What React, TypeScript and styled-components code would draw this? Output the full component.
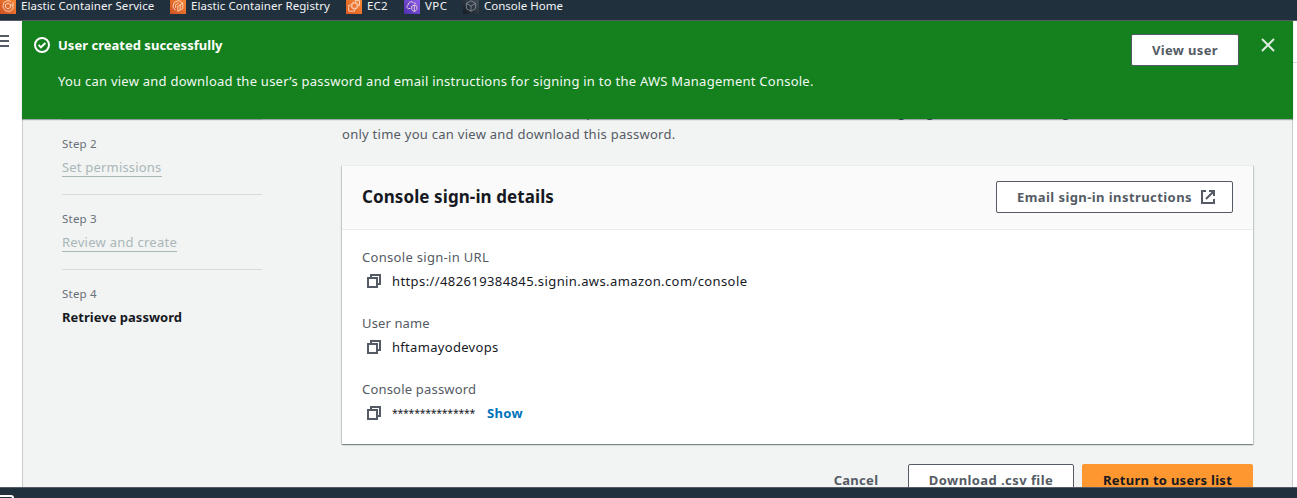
import React from "react";
import styled, { createGlobalStyle, css } from "styled-components";

const Global = createGlobalStyle`
  * { box-sizing: border-box; }
  body { margin: 0; background: #fff; font-family: "Noto Sans", "Open Sans", sans-serif; font-size: 13px; color: #16191f; }
`;

const Page = styled.div`
  display: flex;
  flex-direction: column;
  width: 1297px;
  height: 498px;
  overflow: hidden;
`;

const TopBar = styled.nav`
  display: flex;
  flex: none;
  height: 21px;
  background: #21303d;
  border-bottom: 1px solid #545b64;
  padding-bottom: 6px;
  align-items: flex-end;
`;

const Favorite = styled.a<{ $width: number; $track: number }>`
  display: flex;
  align-items: center;
  gap: 5px;
  height: 16px;
  width: ${(p) => p.$width}px;
  color: #f3f4f5;
  font-size: 11.5px;
  line-height: 12px;
  letter-spacing: ${(p) => p.$track}px;
  white-space: nowrap;
  svg { flex: none; display: block; }
`;

const Body = styled.div`
  display: flex;
  flex: 1;
  min-height: 0;
`;

const LeftRail = styled.aside`
  width: 22px;
  padding-top: 14px;
  background: #fff;
  svg { display: block; }
`;

const RightRail = styled.aside`
  width: 4px;
  background: #fff;
  &::before { content: ""; display: block; height: 41px; border-bottom: 1px solid #d5dbdb; }
`;

const Content = styled.main`
  width: 1271px;
  background: #f2f3f3;
  border-left: 1px solid #c8cccd;
  border-right: 1px solid #c8cccd;
`;

const Banner = styled.section`
  position: relative;
  z-index: 1;
  display: flex;
  align-items: flex-start;
  height: 98px;
  margin: 0 -1px;
  padding: 13px 17px 0 12px;
  background: #14811e;
  color: #f2f8f3;
  box-shadow: 0 1px 1px 0 rgba(0, 28, 36, 0.35);
`;

const BannerText = styled.div`
  flex: 1;
  padding-left: 8px;
  line-height: 22px;
`;

const BannerTitle = styled.div`
  font-weight: 700;
  color: #fff;
  letter-spacing: 0.02px;
`;

const BannerMessage = styled.div`
  margin-top: 14px;
  letter-spacing: 0.247px;
`;

const Columns = styled.div`
  display: flex;
  padding-left: 39px;
`;

const Steps = styled.ol`
  list-style: none;
  margin: 0;
  padding: 0;
  width: 200px;
`;

const Step = styled.li`
  height: 75px;
  padding-top: 16px;
  border-top: 1px solid #d5dbdb;
`;

const StepLabel = styled.div`
  font-size: 11.5px;
  line-height: 16px;
  letter-spacing: 0.22px;
  color: #687078;
`;

const StepTitle = styled.span<{ $current?: boolean; $track: number }>`
  display: inline-block;
  margin-top: 4px;
  height: 21px;
  line-height: 22px;
  letter-spacing: ${(p) => p.$track}px;
  ${(p) =>
    p.$current
      ? css`font-weight: 700; color: #16191f;`
      : css`color: #aab7b8; border-bottom: 1px solid #aab7b8;`}
`;

const Details = styled.div`
  width: 911px;
  margin-left: 80px;
`;

const Intro = styled.p`
  margin: -18px 0 0;
  line-height: 22px;
  letter-spacing: 0.265px;
  color: #545b64;
`;

const Card = styled.section`
  height: 279px;
  margin-top: 20px;
  background: #fff;
  border-top: 1px solid #eaeded;
  box-shadow: 0 1px 1px 0 rgba(0, 28, 36, 0.3), 1px 1px 1px 0 rgba(0, 28, 36, 0.15), -1px 1px 1px 0 rgba(0, 28, 36, 0.15);
`;

const CardHeader = styled.header`
  display: flex;
  align-items: center;
  justify-content: space-between;
  height: 64px;
  padding: 0 20px 2px;
  background: #fafafa;
  border-bottom: 1px solid #eaeded;
`;

const CardTitle = styled.h2`
  margin: 0;
  font-size: 17px;
  line-height: 22px;
  letter-spacing: 0.09px;
`;

const Button = styled.button<{ $kind?: "primary" | "link"; $width: number; $track: number }>`
  display: flex;
  flex: none;
  align-items: center;
  justify-content: center;
  gap: 8px;
  width: ${(p) => p.$width}px;
  height: 32px;
  padding: 0;
  border: 1px solid #545b64;
  border-radius: 2px;
  background: #fff;
  color: #545b64;
  font: 700 13px/20px "Noto Sans", "Open Sans", sans-serif;
  letter-spacing: ${(p) => p.$track}px;
  white-space: nowrap;
  svg { margin-right: -4px; }
  ${(p) => p.$kind === "primary" && css`background: #ff9730; border-color: #ff9730; color: #16191f;`}
  ${(p) => p.$kind === "link" && css`background: transparent; border-color: transparent;`}
`;

const CloseButton = styled.button`
  display: flex;
  margin: 3px 0 0 21px;
  padding: 0;
  border: 0;
  background: none;
`;

const Fields = styled.dl`
  display: flex;
  flex-direction: column;
  gap: 22px;
  margin: 0;
  padding: 16px 20px;
`;

const FieldLabel = styled.dt<{ $track: number }>`
  line-height: 22px;
  letter-spacing: ${(p) => p.$track}px;
  color: #545b64;
`;

const FieldValue = styled.dd<{ $track: number }>`
  display: flex;
  align-items: center;
  margin: 1px 0 -1px;
  padding: 2px 0 0 4px;
  height: 22px;
  line-height: 22px;
  letter-spacing: ${(p) => p.$track}px;
  svg { margin-right: 10px; }
`;

const Mask = styled.span`
  width: 83px;
  font-size: 10.5px;
  letter-spacing: -0.25px;
`;

const ShowLink = styled.a`
  margin-left: 12px;
  font-weight: 700;
  letter-spacing: 0.35px;
  color: #0073bb;
`;

const Actions = styled.div`
  display: flex;
  justify-content: flex-end;
  gap: 8px;
  margin-top: 20px;
`;

const BottomBar = styled.footer`
  position: relative;
  z-index: 2;
  flex: none;
  height: 11px;
  padding-top: 6px;
  background: #21303d;
  border-top: 1px solid #545b64;
  overflow: hidden;
  svg { display: block; }
`;

const StatusSlot = styled.span`
  display: flex;
  margin-top: 3px;
`;

type ServiceKind = "ecs" | "ecr" | "ec2" | "vpc" | "home";

const gradients: Record<ServiceKind, [string, string]> = {
  ecs: ["#cf5122", "#fb8a35"],
  ecr: ["#cf5122", "#fb8a35"],
  ec2: ["#dd5c1f", "#fa8a38"],
  vpc: ["#4d2fae", "#9160ee"],
  home: ["#151b22", "#46515d"],
};

const glyphs: Record<ServiceKind, React.ReactNode> = {
  ecs: (
    <>
      <path d="M10.8 3.6 8 2.5 3.8 4.5 2.9 9l2.6 3.8 4.2.6 3.3-2.6V7" />
      <path d="M8 5.2 5.5 6.6v2.8L8 10.8l2.5-1.4V6.6zM13 4.3V7h-2.3" />
    </>
  ),
  ecr: (
    <>
      <path d="M12.8 5.2 8.8 2.5 4 4.5 2.9 9l2.7 3.3" />
      <path d="M7.8 13.3V8.2l5-3v5.4zM10.2 7v4.7M5.6 9.8V6.8l3-1.8" />
    </>
  ),
  ec2: (
    <>
      <path d="M6 5.2h5v5H6zM4.3 7.2H2.7v6h6v-1.6M9 3.6V2.7h4.5v4.8h-1" />
      <path d="M7.5 3.8v1.4M9.5 3.8v1.4M11 6.7h1.5M11 8.7h1.5M7.5 10.2v1.4M9.5 10.2v1.4M6 6.7H4.5M6 8.7H4.5" />
    </>
  ),
  vpc: (
    <>
      <path d="M6.5 10.5H4.3C2.5 10 2.2 7.6 4.2 7c0-3 3.8-4.5 5.6-1.8 1-.5 2.1.1 2.3 1.2" />
      <path d="M7.7 8.2 10.3 7l2.6 1.2v2.6c0 1.4-1.4 2.2-2.6 2.7-1.2-.5-2.6-1.3-2.6-2.7zM10.3 7v6.5" />
    </>
  ),
  home: <path d="M8 2.8 3.4 5.3v5.3L8 13.2l4.6-2.6V5.3zM3.4 5.3 8 8l4.6-2.7M8 8v5.2" />,
};

const ServiceIcon = ({ kind }: { kind: ServiceKind }) => (
  <svg width="16" height="16" viewBox="0 0 16 16">
    <defs>
      <linearGradient id={kind} x1="0" y1="1" x2="1" y2="0">
        <stop offset="0" stopColor={gradients[kind][0]} />
        <stop offset="1" stopColor={gradients[kind][1]} />
      </linearGradient>
    </defs>
    <rect width="16" height="16" fill={`url(#${kind})`} />
    <g fill="none" stroke={kind === "home" ? "#8c969f" : "#ffe9dc"} strokeWidth="0.8">
      {glyphs[kind]}
    </g>
  </svg>
);

const MenuIcon = () => (
  <svg width="9" height="12" viewBox="0 0 9 12">
    <path d="M0 1h9M0 6h9M0 11h9" stroke="#545b64" strokeWidth="2" />
  </svg>
);

const SuccessIcon = () => (
  <svg width="16" height="16" viewBox="0 0 16 16" fill="none" stroke="#fff" strokeWidth="2">
    <circle cx="8" cy="8" r="7" />
    <path d="m4.6 7.9 2.3 2.4L11.4 6" strokeWidth="1.9" />
  </svg>
);

const CloseIcon = () => (
  <svg width="16" height="16" viewBox="0 0 16 16">
    <path d="m2 2 12 12M14 2 2 14" stroke="#dcebdd" strokeWidth="2" />
  </svg>
);

const ExternalIcon = () => (
  <svg width="16" height="16" viewBox="0 0 16 16" fill="none" stroke="#545b64" strokeWidth="2">
    <path d="M6 2H2v12h12v-4M9 2h5v5M14 2 6 10" />
  </svg>
);

const CopyIcon = () => (
  <svg width="16" height="16" viewBox="0 0 16 16" fill="none" stroke="#545b64" strokeWidth="2">
    <path d="M2 5h9v9H2zM5 5V2h9v9h-3" />
  </svg>
);

const ShellIcon = () => (
  <svg width="16" height="16" viewBox="0 0 16 16">
    <rect x="-3" y="2" width="16" height="13" rx="2" fill="none" stroke="#fff" strokeWidth="2" />
  </svg>
);

const favorites: { kind: ServiceKind; name: string; width: number; track: number }[] = [
  { kind: "ecs", name: "Elastic Container Service", width: 170, track: 0.07 },
  { kind: "ecr", name: "Elastic Container Registry", width: 176, track: 0.07 },
  { kind: "ec2", name: "EC2", width: 58, track: 0.2 },
  { kind: "vpc", name: "VPC", width: 59, track: 0.4 },
  { kind: "home", name: "Console Home", width: 110, track: 0 },
];

export default function App() {
  return (
    <Page>
      <Global />
      <TopBar>
        {favorites.map((f) => (
          <Favorite key={f.kind} $width={f.width} $track={f.track}>
            <ServiceIcon kind={f.kind} />
            <span>{f.name}</span>
          </Favorite>
        ))}
      </TopBar>
      <Body>
        <LeftRail>
          <MenuIcon />
        </LeftRail>
        <Content>
          <Banner>
            <StatusSlot>
              <SuccessIcon />
            </StatusSlot>
            <BannerText>
              <BannerTitle>User created successfully</BannerTitle>
              <BannerMessage>
                You can view and download the user’s password and email instructions for signing in to the AWS Management Console.
              </BannerMessage>
            </BannerText>
            <Button $width={108} $track={0.345}>View user</Button>
            <CloseButton aria-label="Close">
              <CloseIcon />
            </CloseButton>
          </Banner>
          <Columns>
            <Steps>
              <Step>
                <StepLabel>Step 2</StepLabel>
                <StepTitle $track={0.188}>Set permissions</StepTitle>
              </Step>
              <Step>
                <StepLabel>Step 3</StepLabel>
                <StepTitle $track={0.265}>Review and create</StepTitle>
              </Step>
              <Step>
                <StepLabel>Step 4</StepLabel>
                <StepTitle $current $track={0.014}>Retrieve password</StepTitle>
              </Step>
            </Steps>
            <Details>
              <Intro>
                You can view and download the user’s password below or email users instructions for signing in to the AWS Management Console. This is the
                <br />
                only time you can view and download this password.
              </Intro>
              <Card>
                <CardHeader>
                  <CardTitle>Console sign-in details</CardTitle>
                  <Button $width={237} $track={0.425}>
                    Email sign-in instructions
                    <ExternalIcon />
                  </Button>
                </CardHeader>
                <Fields>
                  <div>
                    <FieldLabel $track={0.303}>Console sign-in URL</FieldLabel>
                    <FieldValue $track={0.398}>
                      <CopyIcon />
                      https://482619384845.signin.aws.amazon.com/console
                    </FieldValue>
                  </div>
                  <div>
                    <FieldLabel $track={0.13}>User name</FieldLabel>
                    <FieldValue $track={0.308}>
                      <CopyIcon />
                      hftamayodevops
                    </FieldValue>
                  </div>
                  <div>
                    <FieldLabel $track={0.19}>Console password</FieldLabel>
                    <FieldValue $track={0}>
                      <CopyIcon />
                      <Mask>***************</Mask>
                      <ShowLink>Show</ShowLink>
                    </FieldValue>
                  </div>
                </Fields>
              </Card>
              <Actions>
                <Button $kind="link" $width={88} $track={0.29}>Cancel</Button>
                <Button $width={166} $track={0.43}>Download .csv file</Button>
                <Button $kind="primary" $width={171} $track={0.28}>Return to users list</Button>
              </Actions>
            </Details>
          </Columns>
        </Content>
        <RightRail />
      </Body>
      <BottomBar>
        <ShellIcon />
      </BottomBar>
    </Page>
  );
}
